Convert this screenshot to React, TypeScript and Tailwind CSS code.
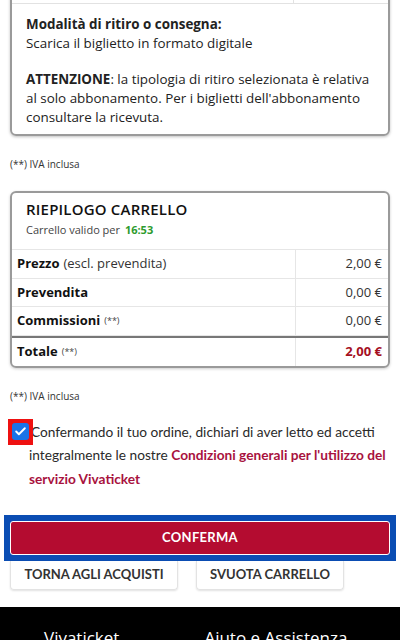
import { Check } from 'lucide-react'

const rows = [
  { label: 'Prezzo', note: '(escl. prevendita)', value: '2,00 €', small: false },
  { label: 'Prevendita', note: '', value: '0,00 €', small: false },
  { label: 'Commissioni', note: '(**)', value: '0,00 €', small: true },
]

const App = () => {
  return (
    <div className="w-[400px] h-[640px] overflow-hidden bg-white text-[#222]" style={{ fontFamily: '"Open Sans", sans-serif' }}>
      <div className="px-[10px]">
        {/* Ritiro box */}
        <div className="-mt-[22px] border-2 border-[#9a9a9a] rounded-[6px] shadow-[0_1px_3px_rgba(0,0,0,0.25)] overflow-hidden">
          <div className="flex h-[24px] border-b border-[#e2e2e2]">
            <div className="w-[282px] border-r border-[#e2e2e2]" />
            <div className="flex-1" />
          </div>
          <div className="pl-[14px] pr-[18px] pt-[11px] pb-[7px] text-[13.4px] leading-[19px] text-[#222]">
            <p className="font-bold">Modalità di ritiro o consegna:</p>
            <p>Scarica il biglietto in formato digitale</p>
            <p className="mt-[17px]">
              <span className="font-bold">ATTENZIONE</span>: la tipologia di ritiro selezionata è relativa al solo abbonamento. Per i biglietti dell'abbonamento consultare la ricevuta.
            </p>
          </div>
        </div>

        <p className="mt-[21px] text-[10px] text-[#333]">(**) IVA inclusa</p>

        {/* Riepilogo */}
        <div className="mt-[19px] border-2 border-[#9a9a9a] rounded-[6px] shadow-[0_1px_3px_rgba(0,0,0,0.2)] overflow-hidden">
          <div className="h-[57px] px-[14px] pt-[5px] border-b border-[#e6e6e6]">
            <h2 className="text-[15px] font-semibold tracking-[0.2px] text-[#111]">RIEPILOGO CARRELLO</h2>
            <p className="mt-[1px] text-[11px] text-[#444]">
              Carrello valido per <span className="ml-[2px] font-bold text-[#2e9b2e]">16:53</span>
            </p>
          </div>
          {rows.map((r) => (
            <div key={r.label} className="flex h-[28.5px] border-b border-[#e6e6e6] text-[13px]">
              <div className="w-[284px] flex items-center pl-[5px] border-r border-[#e6e6e6]">
                <span className="font-bold text-[#111]">{r.label}</span>
                {r.note && <span className={r.small ? 'text-[9px] ml-[4px] text-[#444]' : 'ml-[4px] text-[#333]'}>{r.note}</span>}
              </div>
              <div className="flex-1 flex items-center justify-end pr-[6px] text-[#333]">{r.value}</div>
            </div>
          ))}
          <div className="flex h-[30px] border-t-2 border-[#777] text-[13px]">
            <div className="w-[284px] flex items-center pl-[5px] border-r border-[#e6e6e6]">
              <span className="font-bold text-[#111]">Totale</span>
              <span className="text-[9px] ml-[4px] text-[#444]">(**)</span>
            </div>
            <div className="flex-1 flex items-center justify-end pr-[6px] font-bold text-[#a5101f]">2,00 €</div>
          </div>
        </div>

        <p className="mt-[21px] text-[10px] text-[#333]">(**) IVA inclusa</p>
      </div>

      {/* Condizioni */}
      <div className="mt-[16px] pl-[8px] pr-[6px] relative" style={{ fontFamily: 'Lato, sans-serif' }}>
        <div className="absolute left-[8px] top-[-1px] w-[25px] h-[26px] bg-[#ee1111] flex items-center justify-center">
          <div className="w-[17px] h-[17px] rounded-[3px] bg-[#1a73e8] flex items-center justify-center">
            <Check className="w-[13px] h-[13px] text-white" strokeWidth={3.5} />
          </div>
        </div>
        <p className="pl-[21px] text-[13.7px] leading-[23.5px] text-[#2a2a2a]">
          <span className="inline-block w-[2px]" />Confermando il tuo ordine, dichiari di aver letto ed accetti integralmente le nostre{' '}
          <span className="font-bold text-[#a8123e]">Condizioni generali per l'utilizzo del servizio Vivaticket</span>
        </p>
      </div>

      {/* Bottoni */}
      <div className="mt-[25px] mx-[4px] bg-[#0b4db3] px-[6px] pt-[6px] pb-[6px]">
        <button className="w-full h-[34px] rounded-[3px] bg-[#b40c30] border border-white text-white text-[13px] font-bold tracking-[0.3px]" style={{ fontFamily: 'Lato, sans-serif' }}>
          CONFERMA
        </button>
      </div>
      <div className="flex gap-[18px] px-[10px]" style={{ fontFamily: 'Lato, sans-serif' }}>
        <button className="w-[168px] h-[29px] rounded-b-[4px] border border-t-0 border-[#e3e3e3] shadow-[0_1px_2px_rgba(0,0,0,0.12)] text-[13px] font-bold text-[#333]">
          TORNA AGLI ACQUISTI
        </button>
        <button className="w-[148px] h-[29px] rounded-b-[4px] border border-t-0 border-[#e3e3e3] shadow-[0_1px_2px_rgba(0,0,0,0.12)] text-[13px] font-bold text-[#333]">
          SVUOTA CARRELLO
        </button>
      </div>

      {/* Footer */}
      <div className="mt-[17px] bg-black h-[60px] flex pt-[19px] text-white text-[17px] leading-[24px]" style={{ fontFamily: '"Open Sans", sans-serif' }}>
        <span className="ml-[44px]">Vivaticket</span>
        <span className="ml-[85px]">Aiuto e Assistenza</span>
      </div>
    </div>
  )
}

export default App
